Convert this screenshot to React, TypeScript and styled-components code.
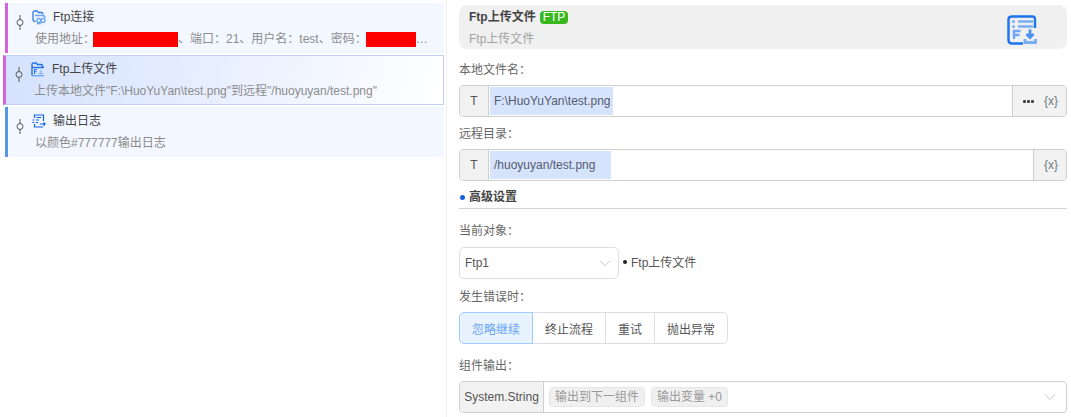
import React from "react";
import styled, { createGlobalStyle } from "styled-components";

const Global = createGlobalStyle`
  html, body { margin: 0; padding: 0; background: #fff; }
  body { font-family: "Liberation Sans", "Noto Sans CJK SC", sans-serif; font-size: 12px; color: #555; }
`;

const Page = styled.div`
  width: 1071px; height: 417px; overflow: hidden; display: flex;
`;
const Left = styled.div`
  width: 447px; height: 417px; box-sizing: border-box; flex: none;
  border-right: 1px solid #f0f0f0; padding: 3px 2px 0 3px;
  display: flex; flex-direction: column; gap: 2px;
`;
const Row = styled.div<{ $accent: string; $selected?: boolean }>`
  box-sizing: border-box; height: 50px;
  margin-left: ${p => (p.$selected ? "0" : "2px")};
  padding-left: ${p => (p.$selected ? "1px" : "0")};
  padding-top: ${p => (p.$selected ? "11px" : "12px")};
  background: ${p => p.$selected ? "linear-gradient(100deg, #d5e2fd 0%, #e6eeff 45%, #ffffff 100%)" : "#f3f7ff"};
  border-left: 3px solid ${p => p.$accent};
  border-top: ${p => (p.$selected ? "1px solid #bfd0f5" : "none")};
  border-right: ${p => (p.$selected ? "1px solid #bfd0f5" : "none")};
  border-bottom: ${p => (p.$selected ? "1px solid #bfd0f5" : "none")};
  display: flex; align-items: flex-start;
`;
const Pin = styled.svg`
  width: 10px; height: 15px; margin-left: 7px; flex: none;
`;
const RowBody = styled.div`
  margin: -6px 0 0 10px; min-width: 0; flex: 1; display: flex; flex-direction: column; gap: 6px;
`;
const RowTitle = styled.div`
  display: flex; align-items: center; gap: 7px; margin-left: -3px; height: 16px;
  color: #444; font-size: 12px; line-height: 16px;
`;
const RowDesc = styled.div`
  color: #8c8c8c; font-size: 12px; line-height: 16px; white-space: nowrap; overflow: hidden;
  display: flex; align-items: center;
`;
const Redact = styled.span<{ $w: number; $shift: number }>`
  display: inline-block; width: ${p => p.$w}px; height: 15px; background: #ff0000; flex: none;
  margin-left: ${p => p.$shift}px;
`;

const Right = styled.div`
  flex: 1; min-width: 0; box-sizing: border-box; padding: 5px 4px 0 12px; display: flex; flex-direction: column;
`;
const Header = styled.div`
  height: 44px; border-radius: 8px; background: #f0f0f0; box-sizing: border-box; flex: none;
  padding: 5px 30px 0 10px; display: flex; justify-content: space-between;
`;
const HeaderText = styled.div`
  display: flex; flex-direction: column; gap: 7px;
`;
const HeaderTitle = styled.div`
  display: flex; align-items: center; gap: 4px; font-weight: bold; color: #444; line-height: 14px; height: 14px; font-size: 12px;
`;
const Badge = styled.span`
  background: #38b81f; color: #fff; border-radius: 4px; font-size: 12px; font-weight: normal; line-height: 13px; height: 13px; padding: 0 3px;
`;
const HeaderSub = styled.div`
  color: #a3a3a3; line-height: 16px;
`;
const Label = styled.div<{ $top: number }>`
  margin-top: ${p => p.$top}px; height: 16px; line-height: 16px; color: #666; flex: none;
`;
const InputRow = styled.div<{ $top: number }>`
  margin-top: ${p => p.$top}px; height: 32px; box-sizing: border-box; flex: none;
  border: 1px solid #cfcfcf; border-radius: 4px; display: flex; align-items: stretch; overflow: hidden; background: #fff;
`;
const Addon = styled.div<{ $w: number }>`
  width: ${p => p.$w}px; box-sizing: border-box; background: #f2f2f2; flex: none; color: #555;
  display: flex; align-items: center; justify-content: center; border-right: 1px solid #cfcfcf;
`;
const EndAddon = styled.div<{ $w: number }>`
  margin-left: auto; width: ${p => p.$w}px; flex: none; background: #f2f2f2; border-left: 1px solid #cfcfcf;
  display: flex; align-items: center; justify-content: flex-end; padding-right: 8px; box-sizing: border-box; gap: 10px; color: #555;
`;
const Selected = styled.div<{ $w: number; $pad: number }>`
  width: ${p => p.$w}px; margin: 1px 0 1px 1px; box-sizing: border-box; padding-left: ${p => p.$pad}px;
  background: #d6e3fd; color: #555b6e; display: flex; align-items: center; white-space: nowrap;
`;
const DotsIcon = styled.svg`
  width: 11px; height: 3px; flex: none;
`;
const VarMark = styled.span`
  font-size: 12px; color: #6a7a80; letter-spacing: 0;
`;
const Section = styled.div`
  margin-top: 8px; height: 20px; box-sizing: border-box; border-bottom: 1px solid #d4d4d4; flex: none;
  display: flex; align-items: flex-start; gap: 4px; font-weight: bold; color: #444; line-height: 16px;
`;
const Dot = styled.span`
  width: 5px; height: 5px; border-radius: 50%; background: #1560e0; margin: 6px 0 0 1px;
`;
const SelectLine = styled.div`
  margin-top: 8px; display: flex; align-items: center; gap: 4px; flex: none;
`;
const SelectBox = styled.div`
  width: 160px; height: 32px; box-sizing: border-box; border: 1px solid #dcdfe6; border-radius: 5px;
  display: flex; align-items: center; justify-content: space-between; padding: 0 7px 0 5px; color: #555;
`;
const Note = styled.div`
  display: flex; align-items: center; gap: 4px; color: #555; margin-top: -3px;
  &::before { content: ""; width: 4px; height: 4px; border-radius: 50%; background: #222; margin-top: 1px; }
`;
const Group = styled.div`
  margin-top: 7px; display: flex; height: 32px; flex: none;
`;
const Seg = styled.div<{ $w: number; $on?: boolean }>`
  width: ${p => p.$w}px; box-sizing: border-box; display: flex; align-items: center; justify-content: center;
  border: 1px solid ${p => (p.$on ? "#9fcdfb" : "#dcdfe6")}; margin-left: ${p => (p.$on ? "0" : "-1px")};
  background: ${p => (p.$on ? "#e9f3ff" : "#fff")}; color: ${p => (p.$on ? "#66a6f5" : "#555")};
  &:first-child { border-radius: 5px 0 0 5px; z-index: 1; }
  &:last-child { border-radius: 0 5px 5px 0; }
`;
const Tag = styled.span`
  background: #f0f0f0; border: 1px solid #e6e6e6; border-radius: 4px; color: #999; height: 18px; line-height: 18px;
  padding: 0 5px; white-space: nowrap;
`;
const Tags = styled.div`
  display: flex; align-items: center; flex: 1; gap: 6px; padding-left: 5px;
`;
const Chevron = styled.svg`
  width: 12px; height: 8px; flex: none;
`;
const OutChevron = styled(Chevron)`
  align-self: center; margin-right: 10px;
`;
const BigIconSvg = styled.svg`
  width: 30px; height: 30px; margin-top: 5px; flex: none;
`;

const PinIcon = () => (
  <Pin viewBox="0 0 10 15" fill="none" stroke="#555" strokeWidth="1">
    <path d="M5 0V4.5M5 10.5V15" />
    <circle cx="5" cy="7.5" r="3" />
  </Pin>
);

const FtpConnIcon = () => (
  <svg width="14" height="15" viewBox="0 0 14 15" fill="none" stroke="#2f78e8" strokeWidth="1.3">
    <path d="M1 9V2.5C1 1.5 1.5 1 2.5 1H5L6.5 2.5H9.5C10.5 2.5 11 3 11 4.5" />
    <path d="M1 9C1 10.5 2 11.5 3.5 11.5" />
    <path d="M3 5.5H10.5C12 5.5 13 6.8 13 8" stroke="#6aa4f5" />
    <circle cx="6.8" cy="10.5" r="2" stroke="#6aa4f5" />
    <circle cx="11" cy="10.5" r="2" stroke="#6aa4f5" />
    <path d="M5 13.7H9" stroke="#6aa4f5" />
  </svg>
);
const FtpUpIcon = () => (
  <svg width="14" height="15" viewBox="0 0 14 15" fill="none" stroke="#1f70e8" strokeWidth="1.4">
    <path d="M1 13.5V2.5C1 1.5 1.5 1 2.5 1H5L6.5 2.5H10C11 2.5 11.5 3 11.5 4V5.5" />
    <path d="M1 5.5H13" />
    <path d="M1 13.7H13" stroke="#6aa4f5" />
    <path d="M3.5 7.5V12M3.5 7.5H6M3.5 9.7H5.5" strokeWidth="1" />
    <path d="M8 11.5H12M10 8V10.5" stroke="#6aa4f5" strokeWidth="1" />
  </svg>
);
const LogIcon = () => (
  <svg width="14" height="14" viewBox="0 0 14 14" fill="none" stroke="#0f62e8" strokeWidth="1.2">
    <path d="M2.5 4V1H11.5V7" />
    <path d="M2.5 10V13H11" />
    <path d="M4.5 3.5H9M0.5 6H2.5M4 6H7M0.5 8.5H2.5M4 8.5H6" />
    <path d="M8 10H13M11.5 8.5L13.2 10L11.5 11.5" />
  </svg>
);
const BigIcon = () => (
  <BigIconSvg viewBox="0 0 30 30" fill="none">
    <path d="M28 13V4.5C28 2.5 27 1.5 25 1.5H5C3 1.5 1.5 2.5 1.5 4.5V25C1.5 27 3 28.5 5 28.5H16" stroke="#1b73ee" strokeWidth="2.4" />
    <path d="M11 6.5H26M11 11.5H26" stroke="#79aef5" strokeWidth="2.6" />
    <circle cx="6.5" cy="6.5" r="1.5" fill="#79aef5" />
    <circle cx="6.5" cy="11.5" r="1.5" fill="#79aef5" />
    <path d="M7 24V16H13.5M7 20H12.5" stroke="#6ea6f4" strokeWidth="2.4" />
    <path d="M23 14.5V22M19.5 19L23 22.5L26.5 19" stroke="#4a90f0" strokeWidth="2.8" />
    <path d="M18 24V27.5H28.5V24" stroke="#79aef5" strokeWidth="2.8" />
  </BigIconSvg>
);
const Dots = () => (
  <DotsIcon viewBox="0 0 11 3" fill="#444">
    <rect x="0" y="0" width="3" height="3" rx="1" />
    <rect x="4" y="0" width="3" height="3" rx="1" />
    <rect x="8" y="0" width="3" height="3" rx="1" />
  </DotsIcon>
);
const Caret = () => (
  <Chevron viewBox="0 0 12 8" fill="none" stroke="#c0c4cc" strokeWidth="1">
    <path d="M1 1.5L6 6.5L11 1.5" />
  </Chevron>
);

export default function App() {
  return (
    <Page>
      <Global />
      <Left>
        <Row $accent="#d662de">
          <PinIcon />
          <RowBody>
            <RowTitle><FtpConnIcon />Ftp连接</RowTitle>
            <RowDesc>使用地址：<Redact $w={85} $shift={-2} />、端口：21、用户名：test、密码：<Redact $w={50} $shift={-1} />…</RowDesc>
          </RowBody>
        </Row>
        <Row $accent="#d662de" $selected>
          <PinIcon />
          <RowBody>
            <RowTitle><FtpUpIcon />Ftp上传文件</RowTitle>
            <RowDesc>上传本地文件"F:\HuoYuYan\test.png"到远程"/huoyuyan/test.png"</RowDesc>
          </RowBody>
        </Row>
        <Row $accent="#5598e0">
          <PinIcon />
          <RowBody>
            <RowTitle><LogIcon />输出日志</RowTitle>
            <RowDesc>以颜色#777777输出日志</RowDesc>
          </RowBody>
        </Row>
      </Left>
      <Right>
        <Header>
          <HeaderText>
            <HeaderTitle>Ftp上传文件<Badge>FTP</Badge></HeaderTitle>
            <HeaderSub>Ftp上传文件</HeaderSub>
          </HeaderText>
          <BigIcon />
        </Header>
        <Label $top={13}>本地文件名：</Label>
        <InputRow $top={7}>
          <Addon $w={29}>T</Addon>
          <Selected $w={123} $pad={4}>F:\HuoYuYan\test.png</Selected>
          <EndAddon $w={54}><Dots /><VarMark>{"{x}"}</VarMark></EndAddon>
        </InputRow>
        <Label $top={9}>远程目录：</Label>
        <InputRow $top={7}>
          <Addon $w={29}>T</Addon>
          <Selected $w={121} $pad={4}>/huoyuyan/test.png</Selected>
          <EndAddon $w={33}><VarMark>{"{x}"}</VarMark></EndAddon>
        </InputRow>
        <Section><Dot />高级设置</Section>
        <Label $top={14}>当前对象：</Label>
        <SelectLine>
          <SelectBox>Ftp1<Caret /></SelectBox>
          <Note>Ftp上传文件</Note>
        </SelectLine>
        <Label $top={10}>发生错误时：</Label>
        <Group>
          <Seg $w={74} $on>忽略继续</Seg>
          <Seg $w={74}>终止流程</Seg>
          <Seg $w={50}>重试</Seg>
          <Seg $w={74}>抛出异常</Seg>
        </Group>
        <Label $top={14}>组件输出：</Label>
        <InputRow $top={7}>
          <Addon $w={84}>System.String</Addon>
          <Tags><Tag>输出到下一组件</Tag><Tag>输出变量 +0</Tag></Tags>
          <OutChevron viewBox="0 0 12 8" fill="none" stroke="#c0c4cc" strokeWidth="1"><path d="M1 1.5L6 6.5L11 1.5" /></OutChevron>
        </InputRow>
      </Right>
    </Page>
  );
}
